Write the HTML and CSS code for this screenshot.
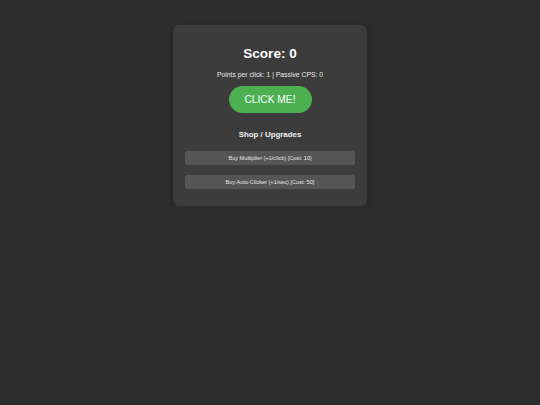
FILE: index.html
```html
<!DOCTYPE html>
<html>
<head>
<meta charset="utf-8">
<link rel="stylesheet" href="styles.css">
</head>
<body>
<div class="card">
  <h1 class="score">Score: 0</h1>
  <p class="stats">Points per click: 1 | Passive CPS: 0</p>
  <button class="click-btn">CLICK ME!</button>
  <h3 class="shop-title">Shop / Upgrades</h3>
  <button class="upgrade">Buy Multiplier (+1/click) [Cost: 10]</button>
  <button class="upgrade">Buy Auto-Clicker (+1/sec) [Cost: 50]</button>
</div>
</body>
</html>
```
FILE: styles.css
```css
html, body {
  margin: 0;
  padding: 0;
  background: #2d2d2d;
  font-family: "Liberation Sans", Arial, sans-serif;
  color: #fff;
}
.card {
  width: 194px;
  box-sizing: border-box;
  margin: 25px auto 0;
  padding: 12px 12px 17px;
  background: #3c3c3c;
  border-radius: 6px;
  display: flex;
  flex-direction: column;
  align-items: center;
  box-shadow: 0 2px 6px rgba(0,0,0,0.25);
}
.score {
  margin: 8px 0 0;
  font-size: 13.6px;
  line-height: 17px;
  font-weight: bold;
}
.stats {
  margin: 8px 0 0;
  font-size: 6.8px;
  line-height: 9px;
  color: #e8e8e8;
}
.click-btn {
  margin-top: 7px;
  width: 83px;
  height: 27px;
  border: none;
  border-radius: 14px;
  background: #4caf50;
  color: #fff;
  font-family: inherit;
  font-size: 10.2px;
  padding: 0;
}
.shop-title {
  margin: 17px 0 0;
  font-size: 7.9px;
  line-height: 10px;
  font-weight: bold;
  color: #f0f0f0;
}
.upgrade {
  width: 100%;
  height: 14px;
  margin-top: 11px;
  border: none;
  border-radius: 2px;
  background: #555555;
  color: #e8e8e8;
  font-family: inherit;
  font-size: 5.6px;
  padding: 0;
}
.upgrade + .upgrade {
  margin-top: 10px;
}
```
